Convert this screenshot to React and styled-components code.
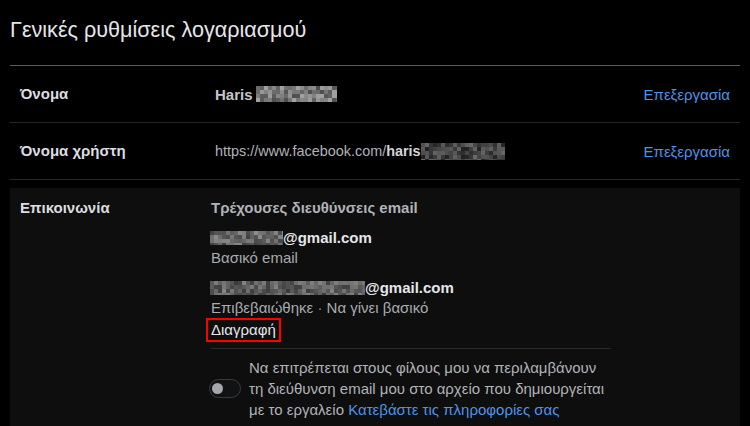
import * as React from "react";
import styled, { createGlobalStyle } from "styled-components";

const GlobalStyle = createGlobalStyle`
  html, body {
    margin: 0;
    background: #000;
  }
  body {
    font-family: "Liberation Sans", Arial, sans-serif;
    -webkit-font-smoothing: antialiased;
  }
`;

// deterministic grey blocks for the blurred-out parts
const mosaicShades = (seed, count) => {
  const out = [];
  let s = seed;
  for (let i = 0; i < count; i++) {
    s = (s * 9301 + 49297) % 233280;
    out.push(s / 233280);
  }
  return out;
};

const Mosaic = ({ width, height = 16, seed = 7, light = 0.35, range = 0.3 }) => {
  const cell = 4;
  const cols = Math.ceil(width / cell);
  const rows = Math.ceil(height / cell);
  const shades = mosaicShades(seed, cols * rows);
  return (
    <MosaicSvg width={width} height={height} viewBox={`0 0 ${width} ${height}`}>
      {shades.map((v, i) => {
        const g = Math.round((light + v * range) * 255);
        return (
          <rect
            key={i}
            x={(i % cols) * cell}
            y={Math.floor(i / cols) * cell}
            width={cell}
            height={cell}
            fill={`rgb(${g},${g},${g})`}
          />
        );
      })}
    </MosaicSvg>
  );
};

const App = () => {
  return (
    <Page>
      <GlobalStyle />
      <Title>Γενικές ρυθμίσεις λογαριασμού</Title>

      <Row>
        <Label>Όνομα</Label>
        <Value>
          <Strong>Haris</Strong>
          <Mosaic width={81} seed={3} light={0.3} range={0.35} />
        </Value>
        <EditLink>Επεξεργασία</EditLink>
      </Row>

      <Row>
        <Label>Όνομα χρήστη</Label>
        <Value $narrow>
          https://www.facebook.com/<Strong $tight>haris</Strong>
          <Mosaic width={84} height={17} seed={11} light={0.12} range={0.3} />
        </Value>
        <EditLink>Επεξεργασία</EditLink>
      </Row>

      <Section>
        <Label>Επικοινωνία</Label>
        <Details>
          <Heading>Τρέχουσες διευθύνσεις email</Heading>

          <EmailBlock>
            <Email>
              <Mosaic width={73} height={14} seed={21} light={0.25} range={0.3} />
              @gmail.com
            </Email>
            <Muted>Βασικό email</Muted>
          </EmailBlock>

          <EmailBlock>
            <Email>
              <Mosaic width={155} height={14} seed={5} light={0.22} range={0.3} />
              @gmail.com
            </Email>
            <Muted>
              Επιβεβαιώθηκε <Dot>·</Dot> Να γίνει βασικό
            </Muted>
            <Marked>Διαγραφή</Marked>
          </EmailBlock>

          <Divider />

          <ToggleRow>
            <Toggle>
              <Knob />
            </Toggle>
            <ToggleText>
              Να επιτρέπεται στους φίλους μου να περιλαμβάνουν τη διεύθυνση
              email μου στο αρχείο που δημιουργείται με το εργαλείο{" "}
              <Link>Κατεβάστε τις πληροφορίες σας</Link>
            </ToggleText>
          </ToggleRow>
        </Details>
      </Section>
    </Page>
  );
};

const Page = styled.div`
  width: 730px;
  padding: 0 10px;
  height: 426px;
  overflow: hidden;
  color: #e4e6eb;
  font-size: 15px;
`;

const Title = styled.h1`
  margin: 0;
  height: 66px;
  display: flex;
  align-items: center;
  padding-bottom: 6px;
  box-sizing: border-box;
  font-size: 21.6px;
  font-weight: 400;
  color: #e4e6eb;
  border-bottom: 1px solid #5c5c5c;
`;

const Row = styled.div`
  display: grid;
  grid-template-columns: 195px 1fr auto;
  align-items: center;
  height: 57px;
  padding: 0 10px;
  box-sizing: border-box;
  border-bottom: 1px solid #262626;
`;

const Label = styled.div`
  font-weight: 700;
  font-size: 15px;
  color: #dcdde0;
  line-height: 20px;
`;

const Value = styled.div`
  display: flex;
  align-items: center;
  color: #b0b3b8;
  font-size: ${(p) => (p.$narrow ? "14.4px" : "15px")};
`;

const Strong = styled.span`
  font-weight: 700;
  color: ${(p) => (p.$tight ? "#d4d5d8" : "#c4c6ca")};
  margin-right: ${(p) => (p.$tight ? "0" : "3px")};
`;

const MosaicSvg = styled.svg`
  display: block;
  flex: none;
`;

const EditLink = styled.span`
  color: #4d94e8;
  font-size: 15px;
`;

const Section = styled.div`
  display: grid;
  grid-template-columns: 190px 1fr;
  margin-top: 8px;
  padding: 10px 10px 0;
  background: #0e0e0e;
  height: 240px;
`;

const Details = styled.div`
  display: flex;
  flex-direction: column;
  align-items: flex-start;
`;

const Heading = styled.div`
  font-weight: 700;
  font-size: 15px;
  line-height: 20px;
  color: #b0b3b8;
  margin-left: 1px;
`;

const EmailBlock = styled.div`
  display: flex;
  flex-direction: column;
  align-items: flex-start;
  margin-top: 10px;
`;

const Email = styled.div`
  display: flex;
  align-items: center;
  font-weight: 700;
  font-size: 15px;
  line-height: 20px;
  color: #e4e6eb;
`;

const Muted = styled.div`
  font-size: 15px;
  line-height: 20px;
  color: #a8abaf;
  margin-left: 1px;
`;

const Dot = styled.span`
  color: #8a8d91;
`;

const Marked = styled.div`
  font-size: 15px;
  line-height: 19px;
  color: #e4e6eb;
  margin: 0 0 0 -4px;
  padding: 0 3px 1px 3px;
  border: 2px solid #ff0000;
`;

const Divider = styled.div`
  width: 400px;
  height: 1px;
  background: #2a2a2a;
  margin-top: 6px;
  margin-left: 1px;
`;

const ToggleRow = styled.div`
  display: flex;
  align-items: center;
  gap: 8px;
  margin-top: 8px;
  margin-left: -1px;
`;

const Toggle = styled.div`
  width: 26px;
  height: 17px;
  border-radius: 10px;
  background: #111213;
  border: 1px solid #3a3b3c;
  display: flex;
  align-items: center;
  padding: 0 2px;
  flex: none;
`;

const Knob = styled.div`
  width: 11px;
  height: 11px;
  border-radius: 50%;
  background: #a3a6ab;
`;

const ToggleText = styled.div`
  width: 362px;
  font-size: 15px;
  line-height: 21px;
  color: #b0b3b8;
`;

const Link = styled.span`
  color: #4d94e8;
`;

export default App;
